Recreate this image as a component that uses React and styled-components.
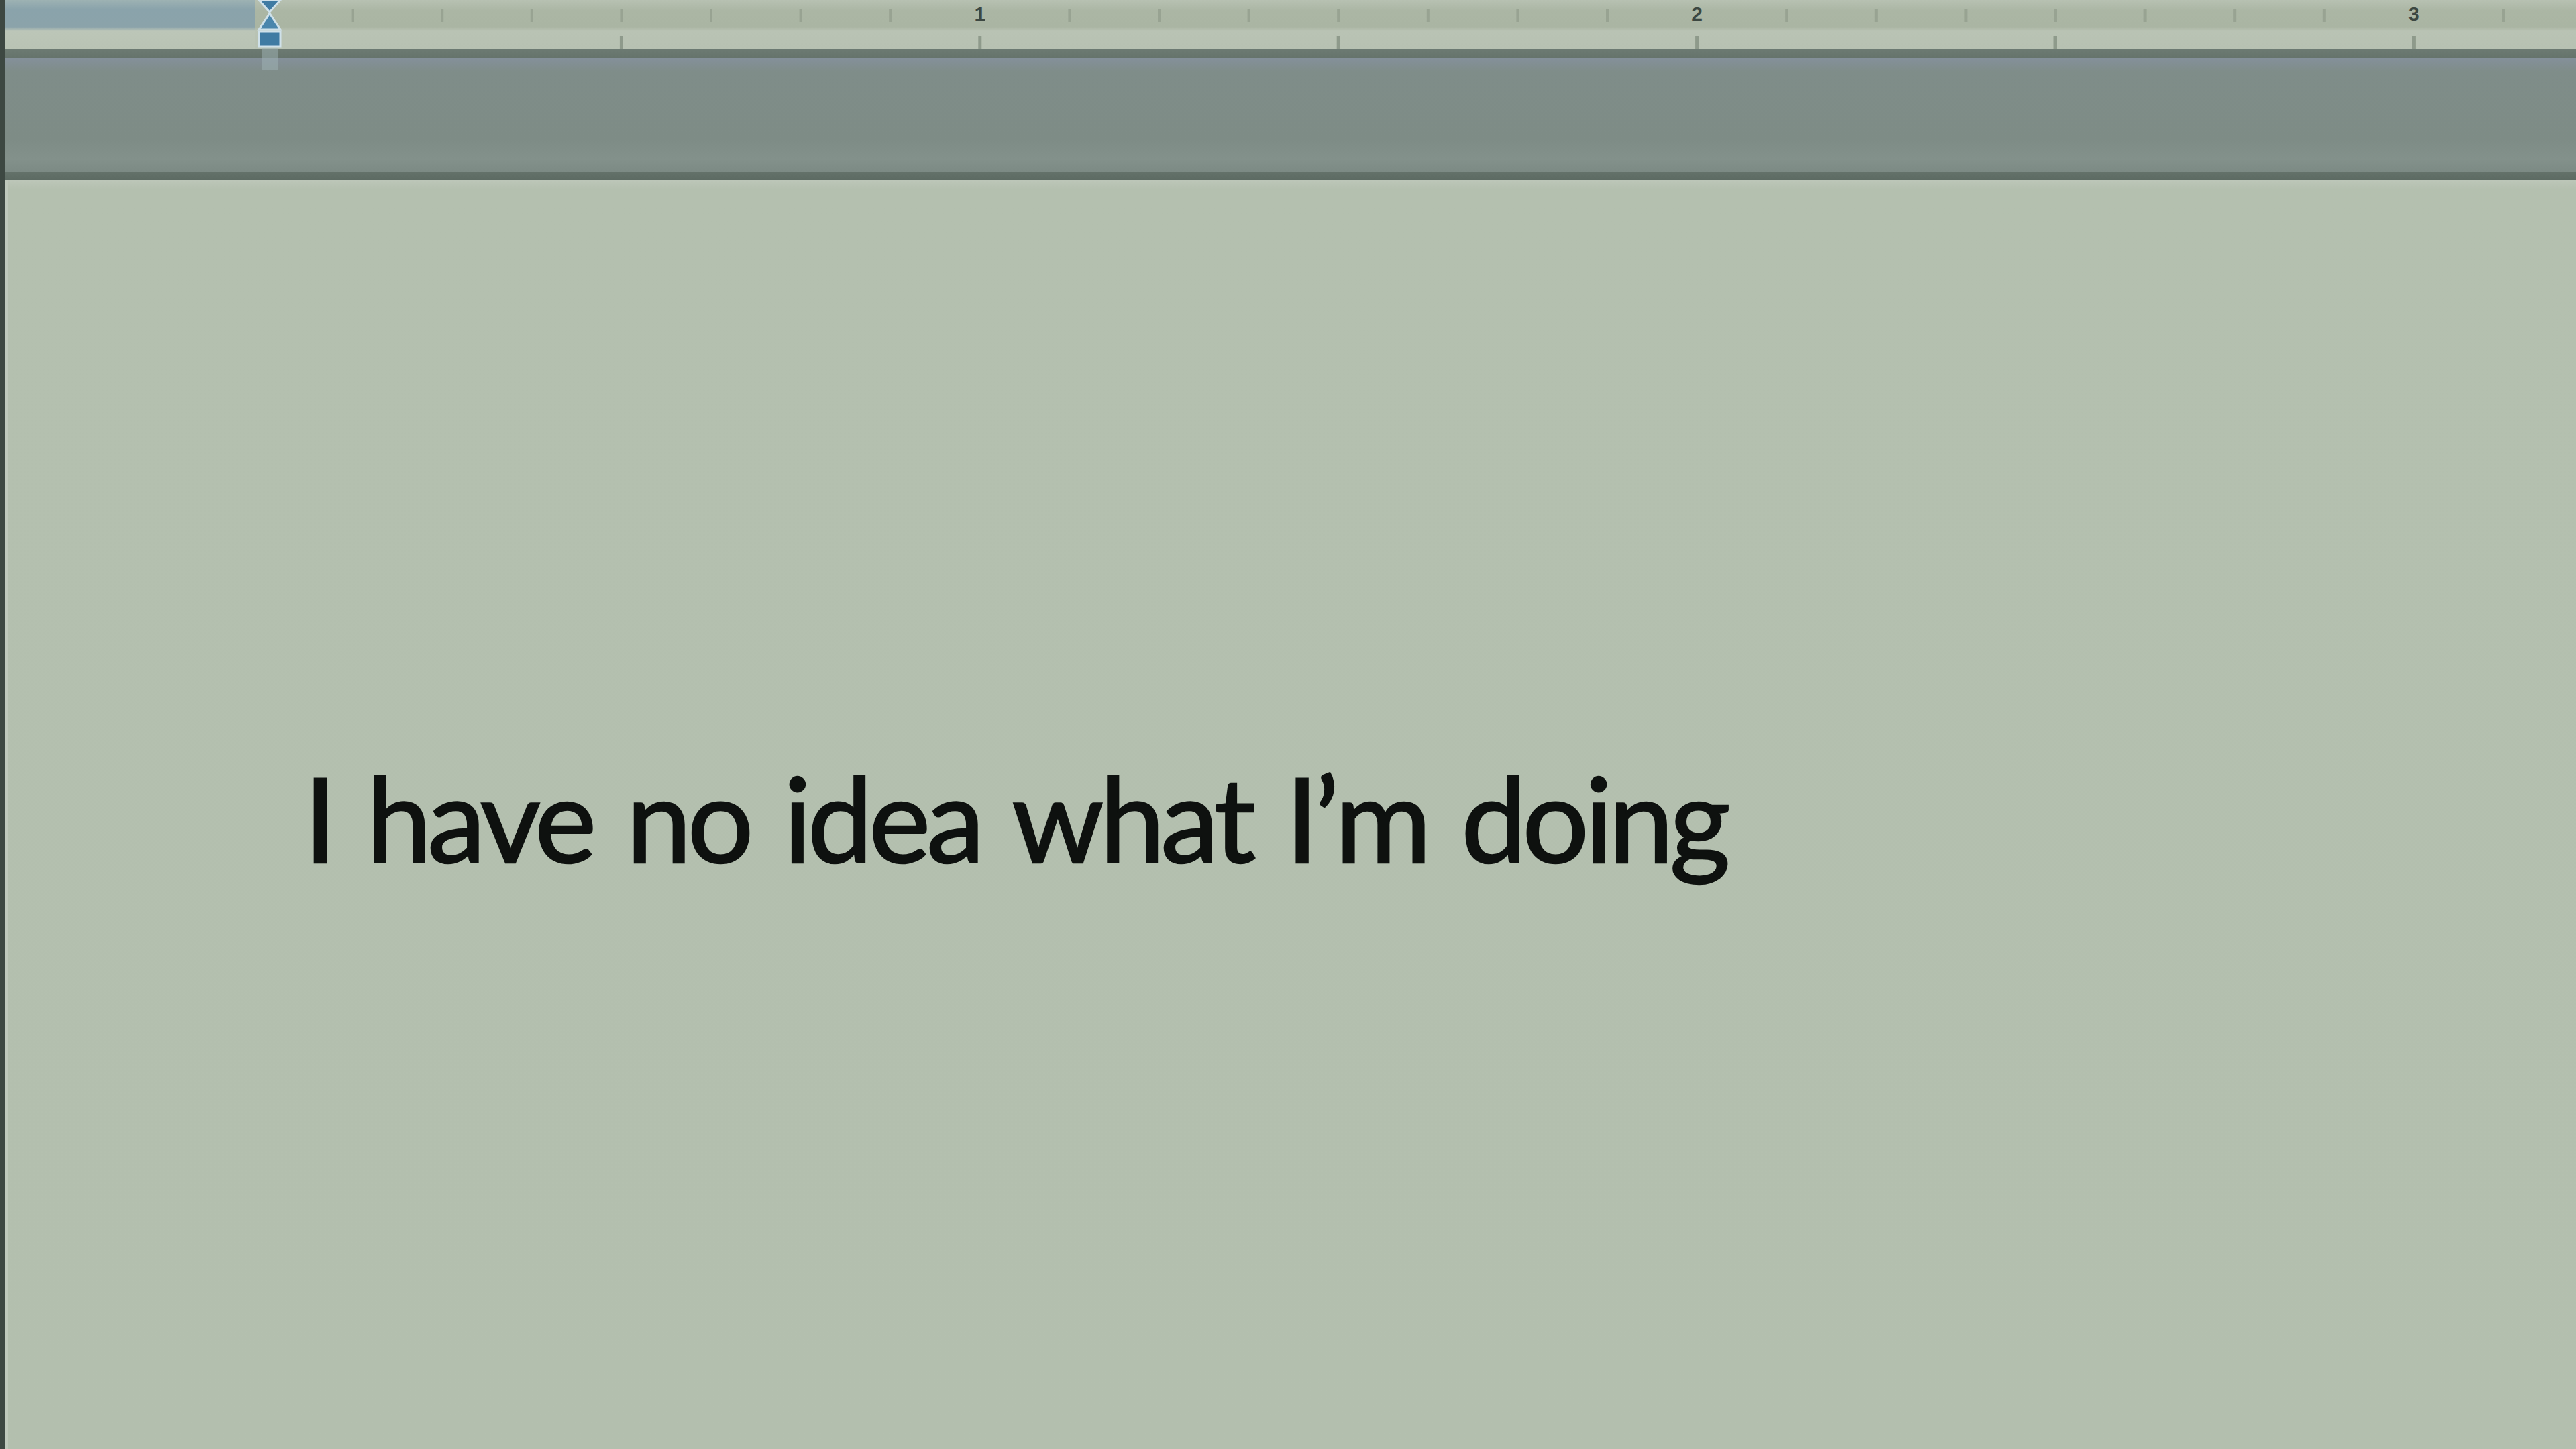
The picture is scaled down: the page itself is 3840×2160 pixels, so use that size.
import React from "react";
import styled, { createGlobalStyle } from "styled-components";

const GlobalStyle = createGlobalStyle`
  html, body {
    margin: 0;
    padding: 0;
    background: #b3bfae;
    overflow: hidden;
  }
`;

const ZERO = 12; // ruler zero, measured from the start of the track
const EIGHTH = 133.6;

const Page = styled.div`
  display: flex;
  flex-direction: column;
  height: 100vh;
  border-left: 7px solid #3d4842;
  box-sizing: border-box;
`;

const Ruler = styled.div`
  display: flex;
  height: 73px;
  flex-shrink: 0;
`;

const MarginZone = styled.div`
  width: 373px;
  background: linear-gradient(
    to bottom,
    #9db2b3 0px,
    #8aa3ab 14px,
    #8ba3aa 40px,
    #bcc6b8 46px,
    #b9c3b4 73px
  );
`;

const Track = styled.div`
  position: relative;
  flex: 1;
  background: linear-gradient(
    to bottom,
    #b7c1b2 0px,
    #abb6a4 16px,
    #aab5a3 40px,
    #b9c3b4 46px,
    #b7c1b2 73px
  );
`;

const TickSvg = styled.svg`
  display: block;
  width: 100%;
  height: 100%;
`;

const IndentMarker = styled.svg`
  position: absolute;
  left: 0;
  top: 0;
  width: 44px;
  height: 104px;
  overflow: visible;
`;

const Divider = styled.div`
  height: ${(p) => p.$h}px;
  flex-shrink: 0;
  background: ${(p) => p.$color};
`;

const Band = styled.div`
  height: 170px;
  flex-shrink: 0;
  background: linear-gradient(
    to bottom,
    #84909a 0px,
    #7f8d89 20px,
    #7e8c86 120px,
    #83918b 150px,
    #7c8a84 170px
  );
`;

const Document = styled.main`
  flex: 1;
  padding: 864px 0 0 446px;
  background: linear-gradient(
    to bottom,
    #bdc7b9 0px,
    #b4c0af 14px,
    #b3bfae 100%
  );
  box-shadow: inset 5px 0 0 #bfc9bc;
`;

const Line = styled.p`
  margin: 0;
  font-family: Lato, "Open Sans", sans-serif;
  font-size: 174px;
  line-height: 1;
  letter-spacing: -6px;
  word-spacing: 12px;
  color: #0e110f;
  -webkit-text-stroke: 2.5px #0e110f;
  white-space: nowrap;
`;

function RulerTicks() {
  const marks = [];
  for (let i = 1; i <= 26; i++) {
    const x = ZERO + i * EIGHTH;
    if (i % 8 === 0) {
      marks.push(
        <text
          key={`n${i}`}
          x={x}
          y={31}
          textAnchor="middle"
          fontFamily="Liberation Sans, sans-serif"
          fontWeight="bold"
          fontSize="30"
          fill="#3c4741"
        >
          {i / 8}
        </text>
      );
    } else {
      marks.push(
        <line key={`t${i}`} x1={x} x2={x} y1={13} y2={33} stroke="#98a392" strokeWidth="4" />
      );
    }
    if (i % 4 === 0) {
      marks.push(
        <line key={`h${i}`} x1={x} x2={x} y1={54} y2={73} stroke="#8e9a8b" strokeWidth="5" />
      );
    }
  }
  return (
    <TickSvg xmlns="http://www.w3.org/2000/svg" preserveAspectRatio="none">
      {marks}
    </TickSvg>
  );
}

export default function App() {
  return (
    <>
      <GlobalStyle />
      <Page>
        <Ruler>
          <MarginZone />
          <Track>
            <RulerTicks />
            <IndentMarker viewBox="0 0 44 104">
              <path d="M6 0 L38 0 L22 18 Z" fill="#3f7ba3" stroke="#cfe1ea" strokeWidth="3" />
              <path d="M22 20 L38 44 L6 44 Z" fill="#4a86ad" stroke="#cfe1ea" strokeWidth="3" />
              <rect x="6" y="47" width="32" height="22" fill="#3f7ba3" stroke="#cfe1ea" strokeWidth="3" />
              <rect x="10" y="72" width="24" height="32" fill="#9fb3b6" opacity="0.5" />
            </IndentMarker>
          </Track>
        </Ruler>
        <Divider $h={14} $color="linear-gradient(to bottom, #6c7a72, #65736b)" />
        <Band />
        <Divider $h={11} $color="linear-gradient(to bottom, #637169, #5d6b63)" />
        <Document>
          <Line>I have no idea what I’m doing</Line>
        </Document>
      </Page>
    </>
  );
}
